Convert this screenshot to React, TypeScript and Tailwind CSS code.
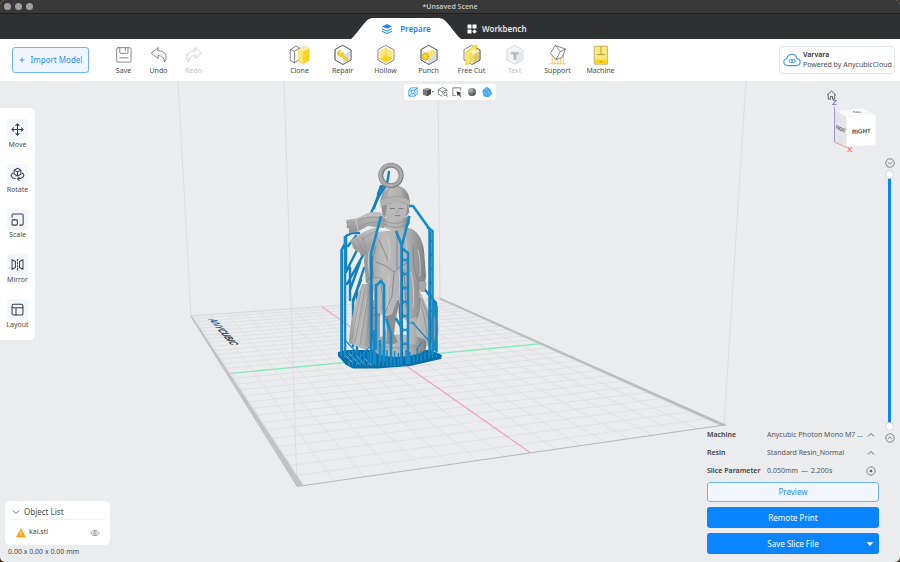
import type { ReactNode } from "react";

type Point = [number, number];

const INK = "#66686b";
const YELLOW = "#fce77d";
const GOLD = "#fbd51c";
const HEX = "M11 1.5 19 6V16L11 20.5 3 16V6Z";

/* ---------- toolbar ---------- */

const ToolIcon = ({ children }: { children: ReactNode }) => (
  <svg viewBox="0 0 22 22" className="h-[22px] w-[22px]" fill="none" stroke={INK} strokeWidth="0.8" strokeLinejoin="round" strokeLinecap="round">
    {children}
  </svg>
);

const fileTools = [
  {
    label: "Save",
    icon: (
      <>
        <rect x="3.7" y="3.7" width="14.4" height="14.4" rx="1.4" />
        <path d="M6.8 3.9V8.6Q6.8 9.4 7.6 9.4H14.2Q15 9.4 15 8.6V3.9M12.4 4V6.4M6.8 13.8H15" />
      </>
    ),
  },
  {
    label: "Undo",
    icon: <path d="M10 3.8 3.3 9.2 10 14.6V11.6C13.6 11.4 15.8 13.4 16.6 18 20.4 12 17 6.6 10 6.8Z" />,
  },
  {
    label: "Redo",
    disabled: true,
    icon: <path stroke="#c3c5c8" d="M12 3.8 18.7 9.2 12 14.6V11.6C8.4 11.4 6.2 13.4 5.4 18 1.6 12 5 6.6 12 6.8Z" />,
  },
];

const modelTools = [
  {
    label: "Clone",
    icon: (
      <>
        <path d="M1.6 5.4 7 2 10.6 4V15.4L5.4 18.8 1.6 16.6ZM1.6 5.4 5.4 7.4V18.8M5.4 7.4 10.6 4" fill="#fff" />
        <path d="M9.6 5.4 15.6 1.8 20 4.6V16.4L14 20 9.600 17.400Z" fill={GOLD} stroke="#e6c117" strokeWidth="0.4" />
        <path d="M9.6 5.4 14 7.6V20L9.600 17.400Z" fill={YELLOW} stroke="none" />
        <path d="M9.6 5.4 15.6 1.8 20 4.6 14 7.6Z" fill="#fdf0a8" stroke="none" />
      </>
    ),
  },
  {
    label: "Repair",
    icon: (
      <>
        <path d={HEX} fill="#fff" />
        <path d="M11 11 19 6V16L11 20.5Z" fill="#dcdde0" stroke="none" />
        <path d={HEX} />
        <path d="M5.4 9.6C5 7.4 7 5.8 9 6.3L7.6 7.9 9 9.5 11 8.4C11.7 9.7 11.4 10.6 11 11.2L16 15.1C16.8 16.3 15.3 17.5 14.3 16.7L9.5 12.5C7.6 13 5.7 12 5.4 9.6Z" fill={GOLD} stroke="#d0ad1c" strokeWidth="0.5" />
      </>
    ),
  },
  {
    label: "Hollow",
    icon: (
      <>
        <path d="M11 3.400 17.600 7.100V15L11 18.800 4.400 15V7.100Z" fill={YELLOW} stroke="none" />
        <path d="M11 11 17.4 14.8 11 18.8 4.6 14.8Z" fill={GOLD} stroke="none" />
        <path d={HEX} />
        <path d="M11 3.400V11" stroke="#e0be2e" strokeWidth="0.5" />
      </>
    ),
  },
  {
    label: "Punch",
    icon: (
      <>
        <path d={HEX} fill="#fff" />
        <path d="M11 11 19 6.4V16L11 20.5Z" fill="#d9dadd" stroke="none" />
        <path d="M3 6.2 11 10.6V20" stroke="#b7b8bb" strokeWidth="0.5" />
        <path d="M5.2 9.4 13.8 5.8Q17.4 6 17.6 9.4L9.6 16Z" fill={YELLOW} stroke="none" />
        <ellipse cx="7.3" cy="12.6" rx="3.1" ry="3.6" fill={GOLD} stroke="#b79512" strokeWidth="0.6" />
        <path d={HEX} />
      </>
    ),
  },
  {
    label: "Free Cut",
    icon: (
      <>
        <path d={HEX} />
        <path d="M5 8 15.6 1V13.4L5 20.8Z" fill={YELLOW} stroke={GOLD} strokeWidth="1.1" />
        <path d="M8 8 13 5.4 18 7.8 12.8 10.4Z" fill="#fdf3bd" stroke="none" />
        <path d="M8 8 12.8 10.4V19L8 16.8Z" fill="#f4dd6a" stroke="none" />
        <path d="M12.8 10.4 18 7.8V16.2L12.8 19Z" fill="#d8c878" stroke="none" />
        <path d="M15.6 4 19 6V16L11 20.5" />
      </>
    ),
  },
  {
    label: "Text",
    disabled: true,
    icon: (
      <>
        <path d={HEX} fill="#f4f4f5" stroke="#cdced1" />
        <path d="M11 11 19 6V16L11 20.5Z" fill="#e6e7e9" stroke="none" />
        <path d="M7.4 8.4H14.6V10H7.4ZM10.1 10H11.9V15.4H10.1Z" fill="#b4b6b9" stroke="#b4b6b9" strokeWidth="0.5" />
      </>
    ),
  },
  {
    label: "Support",
    icon: (
      <>
        <path d="M5.2 12V19.6M8 14V19.6M10.8 15.6V19.6M13.6 14V19.6M16.4 11V19.6M3.4 19.8H18.4" stroke="#f9c453" strokeWidth="0.9" />
        <path d="M8.600 1.600 18.400 5 15 13.600 9 15.400 3.600 9.600Z" fill="#fff" />
        <path d="M8.600 1.600 13.200 7.600 18.400 5M13.200 7.600 9 15.400" />
      </>
    ),
  },
  {
    label: "Machine",
    icon: (
      <>
        <rect x="4.6" y="2.2" width="12.8" height="18" fill={YELLOW} stroke="#b9a24a" strokeWidth="0.8" />
        <rect x="5" y="15.6" width="12" height="4.2" fill={GOLD} stroke="none" />
        <path d="M11 3V10.4M7.2 10.6H14.8M10 17.6H12" stroke="#a08a30" />
      </>
    ),
  },
];

/* ---------- left rail ---------- */

const railTools = [
  {
    label: "Move",
    icon: <path d="M8 2V14M2 8H14M6.2 3.8 8 2 9.8 3.8M6.2 12.2 8 14 9.8 12.2M3.8 6.2 2 8 3.8 9.8M12.2 6.2 14 8 12.2 9.8" />,
  },
  {
    label: "Rotate",
    icon: <path d="M8 1.4 11.6 3.3V7.6L8 9.6 4.4 7.6V3.3ZM4.4 3.3 8 5.2 11.6 3.3M8 5.2V9.6M3 6.4C-.2 8.6 1 11.6 5.6 12.6M13 6.4C16.2 8.6 15 11.8 8.4 12.6M9.8 10.8 8 12.6 9.8 14.4" />,
  },
  {
    label: "Scale",
    icon: (
      <>
        <rect x="2.2" y="8.4" width="5.6" height="5.6" rx="1" />
        <path d="M2.2 5.6V3.4Q2.2 2.2 3.4 2.2H12.8Q14 2.2 14 3.4V12.8Q14 14 12.8 14H10.4" />
      </>
    ),
  },
  {
    label: "Mirror",
    icon: <path d="M2.2 3V13L5.8 11.2V4.8ZM13.8 3V13L10.2 11.2V4.8ZM8 2.4V4M8 6V7.4M8 9V10.4M8 12V13.6" />,
  },
  {
    label: "Layout",
    icon: (
      <>
        <rect x="2.2" y="2.4" width="11.6" height="11.4" rx="1.6" />
        <path d="M2.2 6.2H13.8M6.4 6.2V13.8" />
      </>
    ),
  },
];

/* ---------- view bar ---------- */

const viewModes = [
  {
    name: "Bounding box",
    icon: <path stroke="#2196f3" d="M2 4.4H8.6V11H2ZM4.6 2H11V8.4L8.6 11M2 4.4 4.6 2M8.6 4.4 11 2M4.6 4.4V8.4H8.4M4.6 8.4 2 11" />,
  },
  {
    name: "Standard views",
    icon: (
      <>
        <path d="M1 3.600 5.400 1.800 9.800 3.200V8.600L5.600 11 1 9.200Z" fill="#a2a3a5" stroke="none" />
        <path d="M1 3.600 5.600 5V11L1 9.200Z" fill="#77787a" stroke="none" />
        <path d="M5.600 5 9.800 3.200V8.600L5.600 11Z" fill="#48494b" stroke="none" />
        <path d="M10.400 5.400H13L11.700 7Z" fill="#48494b" stroke="none" />
      </>
    ),
  },
  {
    name: "Inspect",
    icon: (
      <>
        <path d="M5.4 11 1.4 9V4L6 1.6 10.8 4V5.4M1.4 4 6 6.2 10.8 4M6 6.2V8" />
        <circle cx="9" cy="8.6" r="1.8" />
        <path d="M10.4 10 11.8 11.6" />
      </>
    ),
  },
  {
    name: "Box select",
    icon: (
      <>
        <path d="M5 10.4H2V2H10.6V5" />
        <path d="M6 5.8 11.6 7.6 9.4 8.8 11 11 10 11.8 8.4 9.6 7.2 11.4Z" fill="#3c3d40" stroke="none" />
      </>
    ),
  },
  {
    name: "Shading",
    icon: (
      <>
        <defs>
          <radialGradient id="ball" cx="0.35" cy="0.3" r="0.8">
            <stop offset="0" stopColor="#bcbdbe" />
            <stop offset="1" stopColor="#3c3d3f" />
          </radialGradient>
        </defs>
        <circle cx="6.5" cy="6.5" r="4.3" fill="url(#ball)" stroke="none" />
      </>
    ),
  },
  {
    name: "Transparent",
    icon: (
      <>
        <path d="M2 5 6 1.4 9.6 3.6 11.6 8.6 7.8 11.6 3.4 10.8Z" fill="#63b6fb" stroke="#2196f3" />
        <path d="M2 5 6 6 9.6 3.6M6 6 7.8 11.6" stroke="#2b8fe6" strokeWidth="0.6" />
      </>
    ),
  },
];

/* ---------- build plate ---------- */

const backLeft: Point = [191, 316];
const backRight: Point = [440, 298];
const frontRight: Point = [724, 425];
const frontLeft: Point = [297, 486];

// maps a plate coordinate (0..1 across, 0..1 towards the viewer) to the scene
function project(u: number, v: number): Point {
  const [x0, y0] = backLeft;
  const [x1, y1] = backRight;
  const [x2, y2] = frontRight;
  const [x3, y3] = frontLeft;
  const dx1 = x1 - x2, dx2 = x3 - x2, sx = x0 - x1 + x2 - x3;
  const dy1 = y1 - y2, dy2 = y3 - y2, sy = y0 - y1 + y2 - y3;
  const det = dx1 * dy2 - dx2 * dy1;
  const g = (sx * dy2 - dx2 * sy) / det;
  const h = (dx1 * sy - sx * dy1) / det;
  const w = g * u + h * v + 1;
  return [
    ((x1 - x0 + g * x1) * u + (x3 - x0 + h * x3) * v + x0) / w,
    ((y1 - y0 + g * y1) * u + (y3 - y0 + h * y3) * v + y0) / w,
  ];
}

const segment = (a: Point, b: Point) => `M${a[0].toFixed(1)} ${a[1].toFixed(1)}L${b[0].toFixed(1)} ${b[1].toFixed(1)}`;

const PLATE_W = 16.4;
const PLATE_D = 29.8;

const gridPath = [
  ...Array.from({ length: 17 }, (_, i) => 0.5 + (i - 8) / PLATE_W).map((u) => segment(project(u, 0), project(u, 1))),
  ...Array.from({ length: 29 }, (_, i) => 0.5 + (i - 14) / PLATE_D).map((v) => segment(project(0, v), project(1, v))),
].join("");

function BuildPlate() {
  return (
    <g fill="none">
      <path d="M191 316 178 81M297 486 284 81M440 298 438 81M724 425 746 81" stroke="#d9dbdd" strokeWidth="0.9" />
      <path d="M191 316 440 298" stroke="#d0d1d3" strokeWidth="0.8" />
      <path d={gridPath} stroke="#dcddde" strokeWidth="0.8" />
      <path d={segment(project(0, 0.5), project(1, 0.5))} stroke="#7fecb4" strokeWidth="1.1" />
      <path d={segment(project(0.5, 0), project(0.5, 1))} stroke="#f79bc4" strokeWidth="1.1" />
      <path d="M190 316H192L303 485 297 487Z" fill="#c1c2c2" />
      <path d="M440 298 726 425 722 425.5 440 299Z" fill="#b9baba" stroke="#b9baba" strokeWidth="0.8" />
      <path d="M297 486.5 724 425" stroke="#b7b8b8" strokeWidth="1" />
      {/* printed on the plate, so it follows the plate's plane */}
      <text transform="matrix(0.4 0.45 -1 0.07 208 319)" fontSize="11" fontWeight="700" fontStyle="italic" fill="#2e3033" fontFamily="Liberation Sans, sans-serif">
        <tspan fill="#2c5f9e">ANY</tspan>CUBIC
      </text>
    </g>
  );
}

/* ---------- model ---------- */

const backSupports = [
  "M389 172 387 184 379 196 371 213",
  "M385 184 380 190 374 208",
  "M381 186 378 194",
  "M346 268V236L352 233H359",
  "M346 272 364 236M347 284 366 250M350 268V300M353 302 364 268M350 290 360 262M348 246 356 236",
  "M353 346V300L361 280M357 350V290",
  "M421 285 436 303V350M433.5 300V350",
];

const frontSupports = [
  "M341.5 356V250L345 244",
  "M345 358V236",
  "M381 216 371 254V364",
  "M376 284V350M376 286 381 281 384 285V362",
  "M396 231 402 246",
  "M409.5 216 401.5 247V364",
  "M402 248 408 253V364",
  "M409 206H413L429.5 229V356",
  "M427 227 432.5 231V354",
  "M391 364V332M386.5 319 391 334M395.5 318 402 328",
  "M374 364V330M380 362V340M436.5 352V306",
];

const teeth = Array.from({ length: 24 }, (_, i) => {
  const x = 349 + i * 3.8;
  const top = 349 + Math.abs(i - 10) % 4;
  const bottom = x < 400 ? 366 : 366 - (x - 400) * 0.24;
  return `M${x} ${bottom}V${top + (i % 3)}`;
}).join("");

const braces = [258, 272, 286, 300, 314, 328, 342].map((y) => `M402 ${y} 408 ${y + 4}M402 ${y + 4} 408 ${y}`).join("");
const rungs = [240, 254, 268, 282, 296, 310, 324, 338].map((y) => `M429 ${y}H433L429 ${y + 3}`).join("");

function Figurine() {
  return (
    <g strokeLinejoin="round" strokeLinecap="round">
      <defs>
        <linearGradient id="clay" x1="0" x2="1">
          <stop offset="0" stopColor="#979797" />
          <stop offset="0.3" stopColor="#bcbcbc" />
          <stop offset="0.7" stopColor="#afafaf" />
          <stop offset="1" stopColor="#808080" />
        </linearGradient>
        <linearGradient id="clayDown" x1="0" y1="0" x2="0" y2="1">
          <stop offset="0" stopColor="#c0c0c0" />
          <stop offset="1" stopColor="#949494" />
        </linearGradient>
      </defs>

      {/* raft */}
      <path d="M338 352 348 350H430L442 355 441 359 410 366 378 368.5H353L346 365 338 356Z" fill="#0c6ea6" />
      <path d="M345 355 352 362M350 354 359 364M356 355 365 365M364 358 371 365" stroke="#cfe3ee" strokeWidth="0.7" />

      <g fill="none" stroke="#1380bd" strokeWidth="2.4">
        {backSupports.map((d) => <path key={d} d={d} />)}
      </g>

      {/* cloak and sled */}
      <path d="M416 282C423 298 432 318 437 333 437 340 430 346 424 347L410 342Z" fill="url(#clay)" />
      <path d="M418 296Q426 318 428 342M422 300Q430 322 433 338" stroke="#858585" strokeWidth="0.7" fill="none" />
      <path d="M434 316Q440 326 438 335L432 338Z" fill="#999" />
      <path d="M362 284 373 284 373 340 366 350 349 343C350 322 355 300 362 284Z" fill="url(#clay)" />
      <path d="M365 289 355 342M369 290 360 345M371 300 366 346M361 291 352 338" stroke="#8b8b8b" strokeWidth="0.6" fill="none" />
      <path d="M363 289 354 330M367 296 359 340" stroke="#c9c9c9" strokeWidth="0.6" fill="none" />
      <path d="M373 300H380V342H373Z" fill="#9b9b9b" />
      <path d="M373 308H380M373 315H380" stroke="#6f6f6f" strokeWidth="1" />

      {/* base */}
      <path d="M374 340C382 333 418 333 426 341V349C420 358 380 360 374 351Z" fill="url(#clay)" />
      <path d="M374 342C384 350 416 350 426 342" stroke="#8c8c8c" strokeWidth="0.7" fill="none" />

      {/* boots and legs */}
      <path d="M383 300H400L396 318 394 334 398 342Q390 347 384 342L386 326Z" fill="#8f8f8f" />
      <path d="M387 322 386 341" stroke="#bdbdbd" strokeWidth="1.2" />
      <path d="M401 298 421 298 418 318 414 322V333L420 341Q414 346 408 343L407 322 402 316Z" fill="url(#clay)" />
      <path d="M403 314Q410 320 418 315M408 323H414" stroke="#707070" fill="none" strokeWidth="0.9" />
      <path d="M399 300 401 340" stroke="#6d6d6d" strokeWidth="1.6" />

      {/* coat */}
      <path d="M378 232C370 238 365 248 364 262L366 283 373 286 374 300C374 312 383 320 392 314L398 298 402 314C410 320 418 318 420 310L419 286 424 290 426 276 424 250C422 238 417 230 409 228Z" fill="url(#clay)" />
      <path d="M374 284 372 262 376 246M366 281 372 276M376 262 386 266 394 272 401 266 409 262M397 231 397 268M379 240 388 260M413 246 414 268 419 284M394 273 392 296 385 313M404 270 406 306M381 284Q384 298 382 310" stroke="#7f7f7f" strokeWidth="0.8" fill="none" />
      <path d="M387 236Q392 248 389 260M405 236Q408 246 406 258M369 252Q367 264 370 276M418 250Q421 262 420 276M389 275Q386 292 388 308M411 272Q415 290 413 308M399 272Q401 284 399 296" stroke="#cfcfcf" strokeWidth="0.9" fill="none" />
      <path d="M418 283Q422 278 426 283L425 291Q421 293 419 288Z" fill="#a9a9a9" stroke="#777" strokeWidth="0.5" />
      <path d="M368 281Q375 275 383 279L381 283 370 286Z" fill="#b2b2b2" stroke="#7b7b7b" strokeWidth="0.5" />

      {/* scarf tails */}
      <path d="M384 214C377 211 371 211 364 215 358 219 352 219 346 220L347 225 346.5 227 349 229 349 233 357 232 368 226 384 228Z" fill="url(#clayDown)" />
      <path d="M347 223 354 222M347 227 355 226M350 231 357 229M357 221Q368 215 381 218M360 227Q370 220 382 223" stroke="#8c8c8c" strokeWidth="0.6" fill="none" />
      <path d="M356 219 358 231M364 217Q372 213 382 216" stroke="#d0d0d0" strokeWidth="0.7" fill="none" />
      <path d="M378 227C368 228 357 236 350 241L352 245 353 248 356 251 359 252 361 256 366 254Q370 244 378 240Z" fill="url(#clayDown)" />
      <path d="M353 242 358 249M357 239 363 251M362 237 366 248M376 231Q366 236 362 240" stroke="#8c8c8c" strokeWidth="0.6" fill="none" />

      {/* head */}
      <path d="M383 203H409Q410 213 404 219 396 224 387 219 382 212 383 203Z" fill="#b9b9b9" />
      <path d="M382.5 203Q380 212 385 218L387 206ZM407.500 203 409.500 212 406 217Z" fill="#929292" />
      <path d="M390.5 208.500H394.500M399.500 208.500H403M395.500 215.500Q398 216.300 400 215.500" stroke="#747474" strokeWidth="0.9" fill="none" />
      <path d="M398 208V212.500H396.500" stroke="#999" strokeWidth="0.6" fill="none" />
      <path d="M382 216Q395 224 409 215.500L410 223Q406 231 396 231 386 230 380.500 224Z" fill="url(#clay)" />
      <path d="M382 219.500Q395 228 409.500 219M384 224Q396 231 408 224" stroke="#858585" strokeWidth="0.7" fill="none" />
      <path d="M381 202C380 193 386 185.500 395 185.500 404 185.500 410 193 409.500 202Z" fill="url(#clay)" />
      <path d="M380.500 200Q395 192.500 409.500 200L409.500 205Q395 198.500 381.500 207Z" fill="#b3b3b3" stroke="#8a8a8a" strokeWidth="0.5" />
      <path d="M390 187Q387 192 386 196M399 186.500Q403 190 404 196" stroke="#8f8f8f" strokeWidth="0.6" fill="none" />

      {/* keyring loop */}
      <circle cx="391" cy="175.5" r="10.2" fill="none" stroke="#838383" strokeWidth="5" />
      <circle cx="390.6" cy="175.1" r="10.4" fill="none" stroke="#aaaaaa" strokeWidth="3" />

      <g fill="none" stroke="#128ccf" strokeWidth="2.6" strokeLinecap="butt">
        <path d={teeth} strokeWidth="1.5" />
        {frontSupports.map((d) => <path key={d} d={d} />)}
        <path d={braces + rungs + "M412 322 428 340M416 350 422 342M356 362 372 344M345 340 356 352"} strokeWidth="1.2" />
      </g>
      <path d="M342.5 356V252M372 364V256M402.500 364V250M430.500 354V232" stroke="#0b6699" strokeWidth="0.6" />
    </g>
  );
}

function NavCube() {
  return (
    <svg viewBox="0 0 56 68" className="h-[68px] w-[56px] self-end font-['Liberation_Sans',sans-serif]" role="img" aria-label="View cube">
      <path d="M4 6.200 8.500 2 13 6.200M5.300 5.500V10.200H7.500V7.500H9.500V10.200H11.700V5.500" fill="none" stroke="#55585f" strokeWidth="0.9" />
      <text x="9" y="16" fontSize="8" fill="#4b48f0">Z</text>
      <path d="M11.5 18V53" stroke="#8684f5" strokeWidth="0.8" />
      <path d="M11.5 53 24 58.5" stroke="#f26d6d" strokeWidth="0.8" />
      <path d="M13 22 39 19.5 52.500 25.500 23.500 28Z" fill="#f9f9fa" />
      <path d="M13 22 23.500 28V58L13 53Z" fill="#e4e5e6" />
      <path d="M23.500 28 52.500 25.500V55.500L23.500 58Z" fill="#fff" />
      <text transform="matrix(1 -0.07 0 1 29 45)" fontSize="6" fontWeight="700" fill="#4a4b4d">RIGHT</text>
      <text transform="matrix(0.45 0.2 0 1 13 40)" fontSize="6" fontWeight="700" fill="#55565a">FRONT</text>
      <text transform="matrix(0.8 0.2 -0.7 0.35 29 23)" fontSize="6" fontWeight="700" fill="#6c6d70">UP</text>
      <text x="24" y="63" fontSize="8" fill="#f03e3e">X</text>
    </svg>
  );
}

/* ---------- small pieces ---------- */

const Chevron = ({ up }: { up?: boolean }) => (
  <svg viewBox="0 0 8 8" className="h-2 w-2 shrink-0" fill="none" stroke="#55565a" strokeWidth="0.9">
    <path d={up ? "M1 5.5 4 2.5 7 5.5" : "M1 2.5 4 5.5 7 2.5"} />
  </svg>
);

function LayerStep({ up }: { up?: boolean }) {
  return (
    <button type="button" aria-label={up ? "Layer up" : "Layer down"}>
      <svg viewBox="0 0 10 10" className="block h-[10px] w-[10px]" fill="none" stroke="#66686c" strokeWidth="0.8">
        <circle cx="5" cy="5" r="4.2" />
        <path d={up ? "M2.8 5.9 5 3.9 7.2 5.9" : "M2.8 4.2 5 6.2 7.2 4.2"} />
      </svg>
    </button>
  );
}

const thumbClasses =
  "absolute inset-0 h-full w-[9px] appearance-none bg-transparent pointer-events-none [writing-mode:vertical-lr] [direction:rtl] [&::-webkit-slider-thumb]:pointer-events-auto [&::-webkit-slider-thumb]:h-[9px] [&::-webkit-slider-thumb]:w-[9px] [&::-webkit-slider-thumb]:appearance-none [&::-webkit-slider-thumb]:rounded-full [&::-webkit-slider-thumb]:border [&::-webkit-slider-thumb]:border-[#d3d5d8] [&::-webkit-slider-thumb]:bg-white";

function LayerSlider() {
  return (
    <div className="flex w-[21px] flex-col items-center gap-[2px] pt-[77px] pb-[119px]">
      <LayerStep />
      <div className="relative flex w-[9px] flex-1 justify-center py-1">
        <div className="w-[3px] bg-[#0a84ff]" />
        <input type="range" aria-label="Top layer" defaultValue={100} className={thumbClasses} />
        <input type="range" aria-label="Bottom layer" defaultValue={0} className={thumbClasses} />
      </div>
      <LayerStep up />
    </div>
  );
}

function SlicePanel() {
  return (
    <form className="flex w-full flex-col text-[7px] text-[#55565a]">
      <div className="grid h-[18px] grid-cols-[60px_1fr_16px] items-center">
        <label htmlFor="machine" className="font-semibold text-[#3f4043]">Machine</label>
        <select id="machine" className="appearance-none bg-transparent outline-none">
          <option>Anycubic Photon Mono M7 ...</option>
        </select>
        <span className="flex justify-center"><Chevron up /></span>
      </div>
      <div className="grid h-[18px] grid-cols-[60px_1fr_16px] items-center">
        <label htmlFor="resin" className="font-semibold text-[#3f4043]">Resin</label>
        <select id="resin" className="appearance-none bg-transparent outline-none">
          <option>Standard Resin_Normal</option>
        </select>
        <span className="flex justify-center"><Chevron up /></span>
      </div>
      <div className="grid h-[18px] grid-cols-[60px_1fr_16px] items-center">
        <span className="whitespace-nowrap font-semibold text-[#3f4043]">Slice Parameter</span>
        <span className="flex gap-[3px]">
          <span>0.050mm</span>
          <span>—</span>
          <span>2.200s</span>
        </span>
        <button type="button" aria-label="Slice settings" className="flex justify-center">
          <svg viewBox="0 0 10 10" className="h-[10px] w-[10px]" fill="none" stroke="#55565a" strokeWidth="0.7">
            <path d="M3.4 1H6.600L9 3.400V6.600L6.600 9H3.400L1 6.600V3.400Z" strokeLinejoin="round" />
            <circle cx="5" cy="5" r="1" fill="#55565a" />
          </svg>
        </button>
      </div>
      <div className="mt-[2px] flex flex-col gap-[5px] text-[8px]">
        <button type="button" className="h-[20px] rounded-[3px] border border-[#6db4fb] bg-[#f2f7ff] text-[#2490ff]">Preview</button>
        <button type="button" className="h-[21px] rounded-[3px] bg-[#0a84ff] text-white">Remote Print</button>
        <div className="flex h-[21px] rounded-[3px] bg-[#0a84ff] text-white">
          <button type="button" className="flex-1 pl-[18px]">Save Slice File</button>
          <button type="button" aria-label="More save options" className="flex w-[18px] items-center justify-center">
            <svg viewBox="0 0 8 8" className="h-2 w-2"><path d="M.6 2.2H7.4L4 6Z" fill="#fff" /></svg>
          </button>
        </div>
      </div>
    </form>
  );
}

function ObjectList() {
  return (
    <section className="w-[105px] rounded-[5px] bg-white px-[5px] text-[7px] text-[#4a4b4d]">
      <button type="button" className="flex h-[19px] w-full items-center gap-[4px] border-b border-[#f0f1f2] px-[2px] pt-[3px] text-[8px]">
        <Chevron />
        Object List
      </button>
      <div className="flex h-[25px] items-center pr-[5px] pl-[6px]">
        <svg viewBox="0 0 10 10" className="h-[10px] w-[10px]">
          <path d="M5 .8 9.4 9H.6Z" fill="#f8a21c" stroke="#f8a21c" strokeWidth="0.8" strokeLinejoin="round" />
          <path d="M5 3.6V6.3M5 7.2V8.1" stroke="#fff" strokeWidth="0.9" />
        </svg>
        <span className="ml-[3px] flex-1">kai.stl</span>
        <button type="button" aria-label="Toggle visibility">
          <svg viewBox="0 0 10 8" className="block h-2 w-[10px]" fill="none" stroke="#7d7f83" strokeWidth="0.8">
            <path d="M.6 4Q5-1.4 9.4 4 5 9.400.6 4Z" />
            <circle cx="5" cy="4" r="1.3" />
          </svg>
        </button>
      </div>
    </section>
  );
}

/* ---------- header ---------- */

function Header() {
  return (
    <header>
      <div className="relative flex h-[14px] items-center justify-center border-b border-[#1f1f20] bg-[#383838]">
        <div className="absolute left-1 flex gap-1">
          <span className="h-[7px] w-[7px] rounded-full bg-[#9f9f9f]" />
          <span className="h-[7px] w-[7px] rounded-full bg-[#9f9f9f]" />
          <span className="h-[7px] w-[7px] rounded-full bg-[#9f9f9f]" />
        </div>
        <h1 className="text-[7px] leading-none font-semibold text-[#c4c4c4]">*Unsaved Scene</h1>
      </div>

      <nav className="flex h-[25px] items-end justify-center bg-[#2f3032] text-[8px] font-semibold">
        <button type="button" className="relative h-[21px] w-[110px] text-[#1a87f7]">
          <svg viewBox="0 0 110 21" className="absolute inset-0 h-full w-full" preserveAspectRatio="none">
            <path d="M0 21C5 17 11 7 16 2.500 18.500 .3 20 0 24 0H86C90 0 91.500 .3 94 2.500 99 7 105 17 110 21Z" fill="#fff" />
          </svg>
          <span className="relative flex items-center justify-center gap-[7px]">
            <svg viewBox="0 0 12 12" className="h-3 w-3" fill="#1a87f7">
              <path d="M6 1 11 3.4 6 5.8 1 3.4Z" />
              <path d="M1 5.2 6 7.6 11 5.2V6.2L6 8.6 1 6.2ZM1 7.7 6 10.1 11 7.7V8.7L6 11.1 1 8.7Z" />
            </svg>
            Prepare
          </span>
        </button>
        <button type="button" className="flex h-[21px] w-[88px] items-center gap-[5px] pl-[6px] text-[#e8e8e8]">
          <svg viewBox="0 0 10 10" className="h-[10px] w-[10px]" fill="#fff">
            <rect x="0.5" y="0.5" width="4" height="4" rx="0.5" />
            <rect x="5.5" y="0.5" width="4" height="4" rx="0.5" />
            <rect x="0.5" y="5.5" width="4" height="4" rx="0.5" />
            <path d="M7.5 5.2 9.7 7.5 7.5 9.8 5.3 7.5Z" />
          </svg>
          Workbench
        </button>
      </nav>

      <div className="grid h-[42px] grid-cols-[1fr_auto_1fr] items-center bg-white text-[7px] text-[#4a4b4d]">
        <div className="flex items-center pl-3">
          <button type="button" className="flex h-[26px] w-[77px] items-center justify-center gap-[6px] rounded-[3px] border border-[#6db4fb] bg-[#f2f7ff] text-[8px] text-[#2490ff]">
            <svg viewBox="0 0 6 6" className="h-[6px] w-[6px]" stroke="#2490ff" strokeWidth="0.9"><path d="M3 .5V5.5M.5 3H5.5" /></svg>
            Import Model
          </button>
          <div className="ml-[17px] flex">
            {fileTools.map((t) => (
              <button key={t.label} type="button" disabled={t.disabled} className="flex w-[35px] flex-col items-center leading-[10px] disabled:text-[#bfc1c4]">
                <ToolIcon>{t.icon}</ToolIcon>
                {t.label}
              </button>
            ))}
          </div>
        </div>

        <div className="flex">
          {modelTools.map((t) => (
            <button key={t.label} type="button" disabled={t.disabled} className="flex w-[43px] flex-col items-center leading-[10px] whitespace-nowrap disabled:text-[#bfc1c4]">
              <ToolIcon>{t.icon}</ToolIcon>
              {t.label}
            </button>
          ))}
        </div>

        <a href="#account" className="mr-[5px] flex h-[28px] w-[116px] items-center gap-[2px] justify-self-end rounded-[4px] border border-[#e3e4e6] pl-[3px]">
          <svg viewBox="0 0 18 14" className="h-[14px] w-[18px] shrink-0" fill="none" stroke="#3d97f5" strokeWidth="1.1">
            <path d="M4.6 12.6C-.4 12.4-.2 6.2 3.8 5.8 5-.2 12.6-.2 14 5.6 18.4 6.2 18 12.4 13.6 12.6Z" />
            <circle cx="7.700" cy="8" r="1.700" strokeWidth="0.9" />
            <circle cx="10.500" cy="8" r="1.700" strokeWidth="0.9" />
          </svg>
          <span className="flex flex-col leading-[10px] whitespace-nowrap">
            <b className="font-semibold text-[#2f3033]">Varvara</b>
            Powered by AnycubicCloud
          </span>
        </a>
      </div>
    </header>
  );
}

export default function App() {
  return (
    <div className="min-h-screen bg-[#3a2a1c]">
      <div className="flex min-h-screen flex-col overflow-hidden rounded-[5px] bg-[#ebecee] font-['Noto_Sans',sans-serif]">
        <Header />

        <main className="relative flex flex-1">
          <svg viewBox="0 81 900 481" className="absolute inset-0 h-full w-full" preserveAspectRatio="xMidYMid slice" role="img" aria-label="Build plate with supported model">
            <BuildPlate />
            <Figurine />
          </svg>

          <div className="relative grid flex-1 grid-cols-[1fr_auto_1fr]">
            {/* left column */}
            <div className="flex flex-col justify-between pt-[27px] pb-[5px]">
              <aside className="flex w-[35px] flex-col items-center gap-[14px] rounded-r-[6px] bg-white pt-[11px] pb-[10px] text-[7px] leading-[10px] text-[#4a4b4d]">
                {railTools.map((t) => (
                  <button key={t.label} type="button" className="flex flex-col items-center">
                    <span className="flex h-[21px] w-[21px] items-center justify-center rounded-[3px] bg-[#f2f7ff]">
                      <svg viewBox="0 0 16 16" className="h-[15px] w-[15px]" fill="none" stroke="#3c3d40" strokeWidth="1.1" strokeLinecap="round" strokeLinejoin="round">
                        {t.icon}
                      </svg>
                    </span>
                    {t.label}
                  </button>
                ))}
              </aside>

              <div className="flex flex-col gap-[2px] pl-[5px]">
                <ObjectList />
                <p className="pl-[3px] text-[7px] leading-[10px] text-[#4a4b4d]">0.00 x 0.00 x 0.00 mm</p>
              </div>
            </div>

            {/* view modes */}
            <div className="mt-[3px] flex h-[16px] w-[92px] items-center justify-between rounded-[3px] bg-white px-[3px]">
              {viewModes.map((m) => (
                <button key={m.name} type="button" aria-label={m.name}>
                  <svg viewBox="0 0 13 13" className="block h-3 w-3" fill="none" stroke={INK} strokeWidth="0.9" strokeLinejoin="round">
                    {m.icon}
                  </svg>
                </button>
              ))}
            </div>

            {/* right column */}
            <div className="flex justify-end">
              <div className="flex w-[172px] flex-col justify-between pt-2 pb-2">
                <NavCube />
                <SlicePanel />
              </div>
              <LayerSlider />
            </div>
          </div>
        </main>
      </div>
    </div>
  );
}
